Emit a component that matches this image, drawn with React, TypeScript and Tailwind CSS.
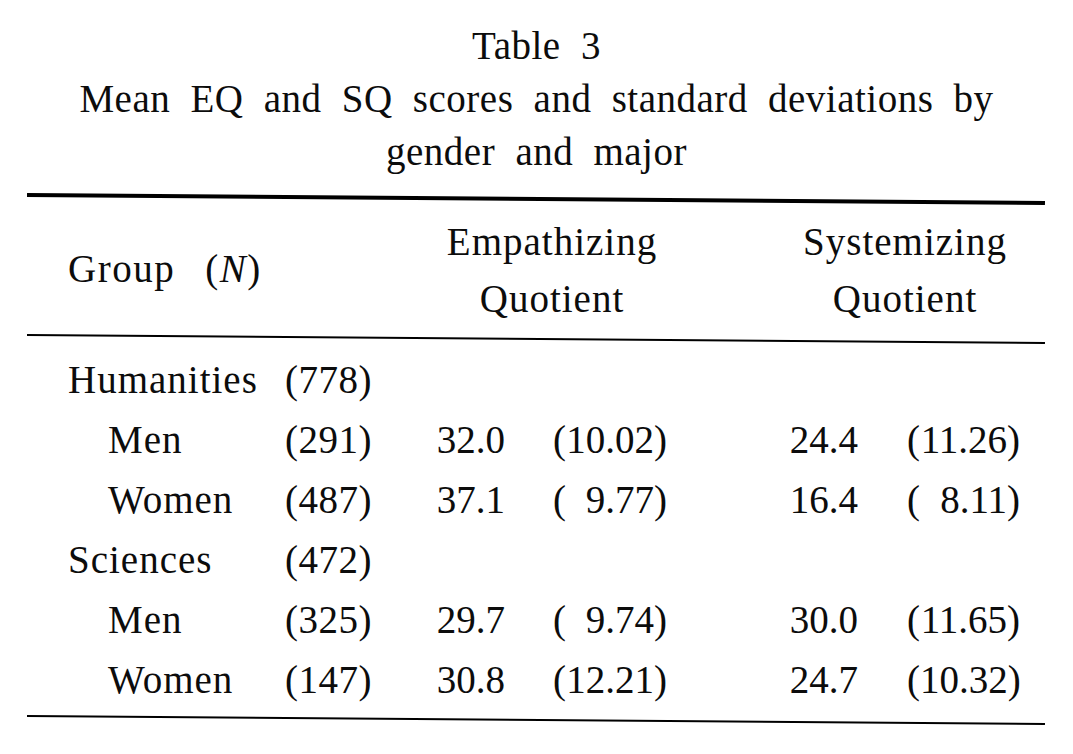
import React from "react";

type Row = {
  label: string;
  n: string;
  sub?: boolean;
  eq?: string;
  eqSd?: string;
  sq?: string;
  sqSd?: string;
};

const rows: Row[] = [
  { label: "Humanities", n: "778" },
  { label: "Men", n: "291", sub: true, eq: "32.0", eqSd: "10.02", sq: "24.4", sqSd: "11.26" },
  { label: "Women", n: "487", sub: true, eq: "37.1", eqSd: "9.77", sq: "16.4", sqSd: "8.11" },
  { label: "Sciences", n: "472" },
  { label: "Men", n: "325", sub: true, eq: "29.7", eqSd: "9.74", sq: "30.0", sqSd: "11.65" },
  { label: "Women", n: "147", sub: true, eq: "30.8", eqSd: "12.21", sq: "24.7", sqSd: "10.32" },
];

// sd in parentheses, short values keep the paren at the left edge like the print
function Sd({ value }: { value?: string }) {
  if (!value) return null;
  return (
    <>
      <span>(</span>
      <span>{value})</span>
    </>
  );
}

function Rule({ thick }: { thick?: boolean }) {
  return (
    <div
      className={
        "ml-[27px] w-[1018px] bg-black rotate-[0.45deg] " +
        (thick ? "h-[4px]" : "h-[2px]")
      }
    />
  );
}

export default function App() {
  return (
    <div className="w-[1073px] h-[754px] bg-white text-[#0c0c0c] font-['Liberation_Serif',serif] text-[39px] overflow-hidden">
      <div className="pt-[19px] text-center leading-[53px] tracking-[0.5px] [word-spacing:10px]">
        <p>Table 3</p>
        <p>Mean EQ and SQ scores and standard deviations by</p>
        <p>gender and major</p>
      </div>

      <div className="mt-[19px]">
        <Rule thick />
      </div>

      <div className="pt-[12px] flex items-center leading-[57px] tracking-[1px]">
        <div className="w-[372px] pl-[68px] pb-[3px] tracking-[1.5px]">
          Group<span className="ml-[30px]">(</span>
          <span className="italic">N</span>)
        </div>
        <div className="ml-[65px] w-[230px] text-center">
          <p>Empathizing</p>
          <p>Quotient</p>
        </div>
        <div className="ml-[123px] w-[230px] text-center">
          <p>Systemizing</p>
          <p>Quotient</p>
        </div>
      </div>

      <div className="mt-[11px]">
        <Rule />
      </div>

      <div className="pt-[10px]">
        {rows.map((r, i) => (
          <div key={i} className="flex items-center h-[60px]">
            <div
              className={
                "w-[282px] tracking-[1px] " + (r.sub ? "pl-[108px]" : "pl-[68px]")
              }
            >
              {r.label}
            </div>
            <div className="w-[90px] text-right tracking-[0.5px]">({r.n})</div>
            <div className="w-[133px] text-right">{r.eq}</div>
            <div className="ml-[48px] w-[114px] flex justify-between">
              <Sd value={r.eqSd} />
            </div>
            <div className="w-[191px] text-right">{r.sq}</div>
            <div className="ml-[49px] w-[113px] flex justify-between">
              <Sd value={r.sqSd} />
            </div>
          </div>
        ))}
      </div>

      <div className="mt-[9px]">
        <Rule />
      </div>
    </div>
  );
}
